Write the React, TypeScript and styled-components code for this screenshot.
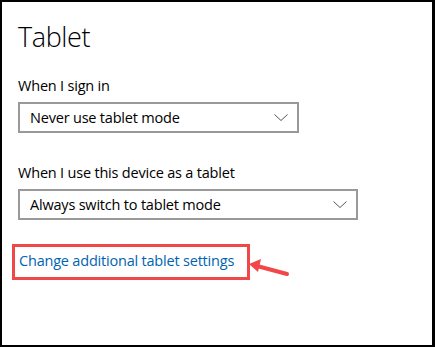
import React from 'react';
import styled, { createGlobalStyle } from 'styled-components';

const GlobalStyle = createGlobalStyle`
    html, body {
        margin: 0;
        padding: 0;
        background: #ffffff;
    }
`;

const Frame = styled.div`
    width: 435px;
    height: 347px;
    box-sizing: border-box;
    border-style: solid;
    border-color: #000000;
    border-width: 2px 3px 2px 2px;
    background: #ffffff;
    padding: 17px 0 0 16px;
    font-family: "Open Sans", "Noto Sans", sans-serif;
    color: #000000;
    display: flex;
    flex-direction: column;
    align-items: flex-start;
`;

const Title = styled.h1`
    margin: 0;
    font-size: 27px;
    font-weight: 300;
    line-height: 36px;
    letter-spacing: -0.4px;
`;

const Label = styled.div<{ $top: number }>`
    font-size: 14.5px;
    line-height: 20px;
    margin-top: ${(p) => p.$top}px;
    letter-spacing: -0.2px;
`;

const Select = styled.div<{ $width: number }>`
    width: ${(p) => p.$width}px;
    height: 31px;
    box-sizing: border-box;
    border: 2px solid #999999;
    margin-top: 6px;
    display: flex;
    align-items: center;
    justify-content: space-between;
    padding: 0 8px 0 10px;
    font-size: 14.5px;
    letter-spacing: -0.2px;
`;

const Chevron = () => (
    <svg width="16" height="9" viewBox="0 0 16 9">
        <path d="M1.5 1.5 L8 7.5 L14.5 1.5" fill="none" stroke="#555555" strokeWidth="1" />
    </svg>
);

const Highlight = styled.div`
    position: relative;
    margin: 24px 0 0 -6px;
    border: 3px solid #f04848;
    padding: 2px 13px 5px 4px;
`;

const Link = styled.a`
    color: #0063b1;
    font-size: 14.5px;
    line-height: 23px;
    text-decoration: none;
    letter-spacing: -0.2px;
`;

const Arrow = styled.svg`
    position: absolute;
    left: 100%;
    top: 12px;
`;

const App: React.FC = () => {
    return (
        <>
            <GlobalStyle />
            <Frame>
                <Title>Tablet</Title>
                <Label $top={21}>When I sign in</Label>
                <Select $width={281}>
                    <span>Never use tablet mode</span>
                    <Chevron />
                </Select>
                <Label $top={30}>When I use this device as a tablet</Label>
                <Select $width={340}>
                    <span>Always switch to tablet mode</span>
                    <Chevron />
                </Select>
                <Highlight>
                    <Link href="#">Change additional tablet settings</Link>
                    <Arrow width="44" height="20" viewBox="0 0 44 20">
                        <path d="M40 15 L10 7" stroke="#f04848" strokeWidth="4" strokeLinecap="round" />
                        <path d="M2 5 L14 0 L11 13 Z" fill="#f04848" />
                    </Arrow>
                </Highlight>
            </Frame>
        </>
    );
};

export default App;
